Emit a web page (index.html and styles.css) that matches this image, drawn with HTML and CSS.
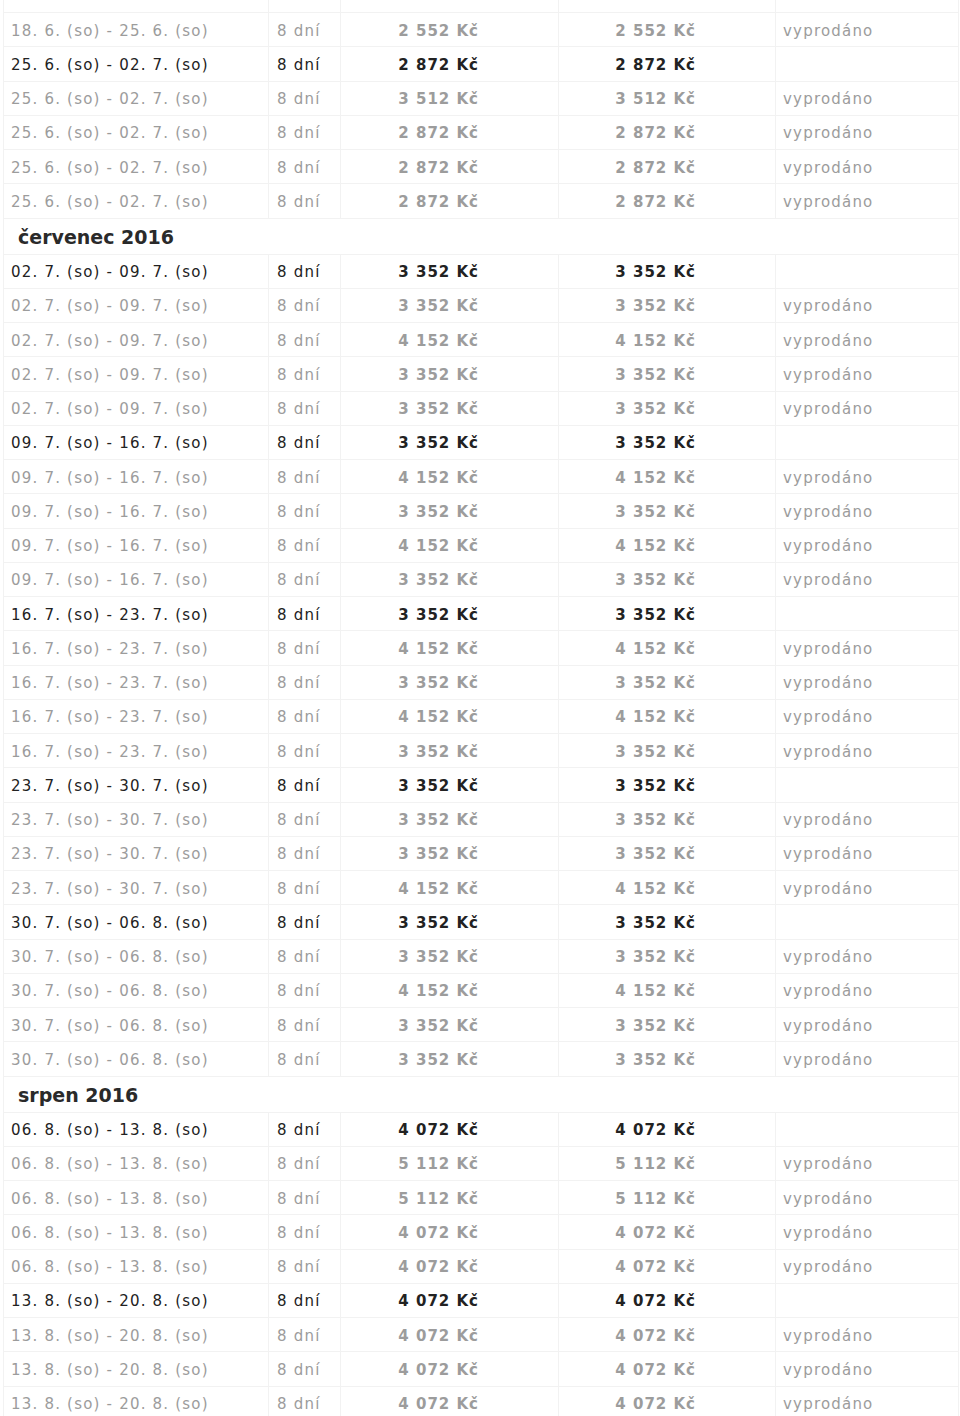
FILE: index.html
```html
<!DOCTYPE html>
<html lang="cs">
<head>
<meta charset="utf-8">
<title>Termíny</title>
<link rel="stylesheet" href="styles.css">
</head>
<body>
<div class="terms">
  <div class="row spacer"><span></span><span></span><span></span><span></span><span></span></div>

  <div class="row sold"><span class="date">18. 6. (so) - 25. 6. (so)</span><span class="days">8 dní</span><span class="price">2 552 Kč</span><span class="price">2 552 Kč</span><span class="state">vyprodáno</span></div>
  <div class="row"><span class="date">25. 6. (so) - 02. 7. (so)</span><span class="days">8 dní</span><span class="price">2 872 Kč</span><span class="price">2 872 Kč</span><span class="state"></span></div>
  <div class="row sold"><span class="date">25. 6. (so) - 02. 7. (so)</span><span class="days">8 dní</span><span class="price">3 512 Kč</span><span class="price">3 512 Kč</span><span class="state">vyprodáno</span></div>
  <div class="row sold"><span class="date">25. 6. (so) - 02. 7. (so)</span><span class="days">8 dní</span><span class="price">2 872 Kč</span><span class="price">2 872 Kč</span><span class="state">vyprodáno</span></div>
  <div class="row sold"><span class="date">25. 6. (so) - 02. 7. (so)</span><span class="days">8 dní</span><span class="price">2 872 Kč</span><span class="price">2 872 Kč</span><span class="state">vyprodáno</span></div>
  <div class="row sold"><span class="date">25. 6. (so) - 02. 7. (so)</span><span class="days">8 dní</span><span class="price">2 872 Kč</span><span class="price">2 872 Kč</span><span class="state">vyprodáno</span></div>

  <div class="month">červenec 2016</div>

  <div class="row"><span class="date">02. 7. (so) - 09. 7. (so)</span><span class="days">8 dní</span><span class="price">3 352 Kč</span><span class="price">3 352 Kč</span><span class="state"></span></div>
  <div class="row sold"><span class="date">02. 7. (so) - 09. 7. (so)</span><span class="days">8 dní</span><span class="price">3 352 Kč</span><span class="price">3 352 Kč</span><span class="state">vyprodáno</span></div>
  <div class="row sold"><span class="date">02. 7. (so) - 09. 7. (so)</span><span class="days">8 dní</span><span class="price">4 152 Kč</span><span class="price">4 152 Kč</span><span class="state">vyprodáno</span></div>
  <div class="row sold"><span class="date">02. 7. (so) - 09. 7. (so)</span><span class="days">8 dní</span><span class="price">3 352 Kč</span><span class="price">3 352 Kč</span><span class="state">vyprodáno</span></div>
  <div class="row sold"><span class="date">02. 7. (so) - 09. 7. (so)</span><span class="days">8 dní</span><span class="price">3 352 Kč</span><span class="price">3 352 Kč</span><span class="state">vyprodáno</span></div>

  <div class="row"><span class="date">09. 7. (so) - 16. 7. (so)</span><span class="days">8 dní</span><span class="price">3 352 Kč</span><span class="price">3 352 Kč</span><span class="state"></span></div>
  <div class="row sold"><span class="date">09. 7. (so) - 16. 7. (so)</span><span class="days">8 dní</span><span class="price">4 152 Kč</span><span class="price">4 152 Kč</span><span class="state">vyprodáno</span></div>
  <div class="row sold"><span class="date">09. 7. (so) - 16. 7. (so)</span><span class="days">8 dní</span><span class="price">3 352 Kč</span><span class="price">3 352 Kč</span><span class="state">vyprodáno</span></div>
  <div class="row sold"><span class="date">09. 7. (so) - 16. 7. (so)</span><span class="days">8 dní</span><span class="price">4 152 Kč</span><span class="price">4 152 Kč</span><span class="state">vyprodáno</span></div>
  <div class="row sold"><span class="date">09. 7. (so) - 16. 7. (so)</span><span class="days">8 dní</span><span class="price">3 352 Kč</span><span class="price">3 352 Kč</span><span class="state">vyprodáno</span></div>

  <div class="row"><span class="date">16. 7. (so) - 23. 7. (so)</span><span class="days">8 dní</span><span class="price">3 352 Kč</span><span class="price">3 352 Kč</span><span class="state"></span></div>
  <div class="row sold"><span class="date">16. 7. (so) - 23. 7. (so)</span><span class="days">8 dní</span><span class="price">4 152 Kč</span><span class="price">4 152 Kč</span><span class="state">vyprodáno</span></div>
  <div class="row sold"><span class="date">16. 7. (so) - 23. 7. (so)</span><span class="days">8 dní</span><span class="price">3 352 Kč</span><span class="price">3 352 Kč</span><span class="state">vyprodáno</span></div>
  <div class="row sold"><span class="date">16. 7. (so) - 23. 7. (so)</span><span class="days">8 dní</span><span class="price">4 152 Kč</span><span class="price">4 152 Kč</span><span class="state">vyprodáno</span></div>
  <div class="row sold"><span class="date">16. 7. (so) - 23. 7. (so)</span><span class="days">8 dní</span><span class="price">3 352 Kč</span><span class="price">3 352 Kč</span><span class="state">vyprodáno</span></div>

  <div class="row"><span class="date">23. 7. (so) - 30. 7. (so)</span><span class="days">8 dní</span><span class="price">3 352 Kč</span><span class="price">3 352 Kč</span><span class="state"></span></div>
  <div class="row sold"><span class="date">23. 7. (so) - 30. 7. (so)</span><span class="days">8 dní</span><span class="price">3 352 Kč</span><span class="price">3 352 Kč</span><span class="state">vyprodáno</span></div>
  <div class="row sold"><span class="date">23. 7. (so) - 30. 7. (so)</span><span class="days">8 dní</span><span class="price">3 352 Kč</span><span class="price">3 352 Kč</span><span class="state">vyprodáno</span></div>
  <div class="row sold"><span class="date">23. 7. (so) - 30. 7. (so)</span><span class="days">8 dní</span><span class="price">4 152 Kč</span><span class="price">4 152 Kč</span><span class="state">vyprodáno</span></div>

  <div class="row"><span class="date">30. 7. (so) - 06. 8. (so)</span><span class="days">8 dní</span><span class="price">3 352 Kč</span><span class="price">3 352 Kč</span><span class="state"></span></div>
  <div class="row sold"><span class="date">30. 7. (so) - 06. 8. (so)</span><span class="days">8 dní</span><span class="price">3 352 Kč</span><span class="price">3 352 Kč</span><span class="state">vyprodáno</span></div>
  <div class="row sold"><span class="date">30. 7. (so) - 06. 8. (so)</span><span class="days">8 dní</span><span class="price">4 152 Kč</span><span class="price">4 152 Kč</span><span class="state">vyprodáno</span></div>
  <div class="row sold"><span class="date">30. 7. (so) - 06. 8. (so)</span><span class="days">8 dní</span><span class="price">3 352 Kč</span><span class="price">3 352 Kč</span><span class="state">vyprodáno</span></div>
  <div class="row sold"><span class="date">30. 7. (so) - 06. 8. (so)</span><span class="days">8 dní</span><span class="price">3 352 Kč</span><span class="price">3 352 Kč</span><span class="state">vyprodáno</span></div>

  <div class="month">srpen 2016</div>

  <div class="row"><span class="date">06. 8. (so) - 13. 8. (so)</span><span class="days">8 dní</span><span class="price">4 072 Kč</span><span class="price">4 072 Kč</span><span class="state"></span></div>
  <div class="row sold"><span class="date">06. 8. (so) - 13. 8. (so)</span><span class="days">8 dní</span><span class="price">5 112 Kč</span><span class="price">5 112 Kč</span><span class="state">vyprodáno</span></div>
  <div class="row sold"><span class="date">06. 8. (so) - 13. 8. (so)</span><span class="days">8 dní</span><span class="price">5 112 Kč</span><span class="price">5 112 Kč</span><span class="state">vyprodáno</span></div>
  <div class="row sold"><span class="date">06. 8. (so) - 13. 8. (so)</span><span class="days">8 dní</span><span class="price">4 072 Kč</span><span class="price">4 072 Kč</span><span class="state">vyprodáno</span></div>
  <div class="row sold"><span class="date">06. 8. (so) - 13. 8. (so)</span><span class="days">8 dní</span><span class="price">4 072 Kč</span><span class="price">4 072 Kč</span><span class="state">vyprodáno</span></div>

  <div class="row"><span class="date">13. 8. (so) - 20. 8. (so)</span><span class="days">8 dní</span><span class="price">4 072 Kč</span><span class="price">4 072 Kč</span><span class="state"></span></div>
  <div class="row sold"><span class="date">13. 8. (so) - 20. 8. (so)</span><span class="days">8 dní</span><span class="price">4 072 Kč</span><span class="price">4 072 Kč</span><span class="state">vyprodáno</span></div>
  <div class="row sold"><span class="date">13. 8. (so) - 20. 8. (so)</span><span class="days">8 dní</span><span class="price">4 072 Kč</span><span class="price">4 072 Kč</span><span class="state">vyprodáno</span></div>
  <div class="row sold"><span class="date">13. 8. (so) - 20. 8. (so)</span><span class="days">8 dní</span><span class="price">4 072 Kč</span><span class="price">4 072 Kč</span><span class="state">vyprodáno</span></div>
</div>
</body>
</html>
```

FILE: styles.css
```css
html, body {
  margin: 0;
  padding: 0;
  background: #ffffff;
}

body {
  font-family: "DejaVu Sans", Verdana, sans-serif;
  font-size: 15px;
  color: #222222;
  overflow: hidden;
}

.terms {
  margin-left: 3px;
  width: 956px;
  box-sizing: border-box;
  border-left: 1px solid #f2f2f2;
  border-right: 1px solid #f2f2f2;
}

.row {
  display: grid;
  grid-template-columns: 265px 72px 218px 217px 182px;
  height: 34.25px;
  box-sizing: border-box;
  border-bottom: 1px solid #f2f2f2;
  letter-spacing: 1.2px;
}

.row.spacer {
  height: 13px;
}

.row > span {
  display: flex;
  align-items: center;
  box-sizing: border-box;
  padding-top: 2px;
  border-right: 1px solid #f2f2f2;
  white-space: nowrap;
}

.row > span:last-child {
  border-right: none;
}

.date {
  padding-left: 7px;
}

.days {
  padding-left: 8px;
}

.price {
  justify-content: flex-end;
  padding-right: 79px;
  font-weight: bold;
  letter-spacing: 1px;
}

.state {
  padding-left: 7px;
}

.row.sold {
  color: #9c9c9c;
}

.month {
  height: 36px;
  box-sizing: border-box;
  border-bottom: 1px solid #f2f2f2;
  display: flex;
  align-items: center;
  padding-left: 14px;
  padding-top: 2px;
  font-size: 19px;
  font-weight: bold;
  color: #2a2a2a;
}
```
